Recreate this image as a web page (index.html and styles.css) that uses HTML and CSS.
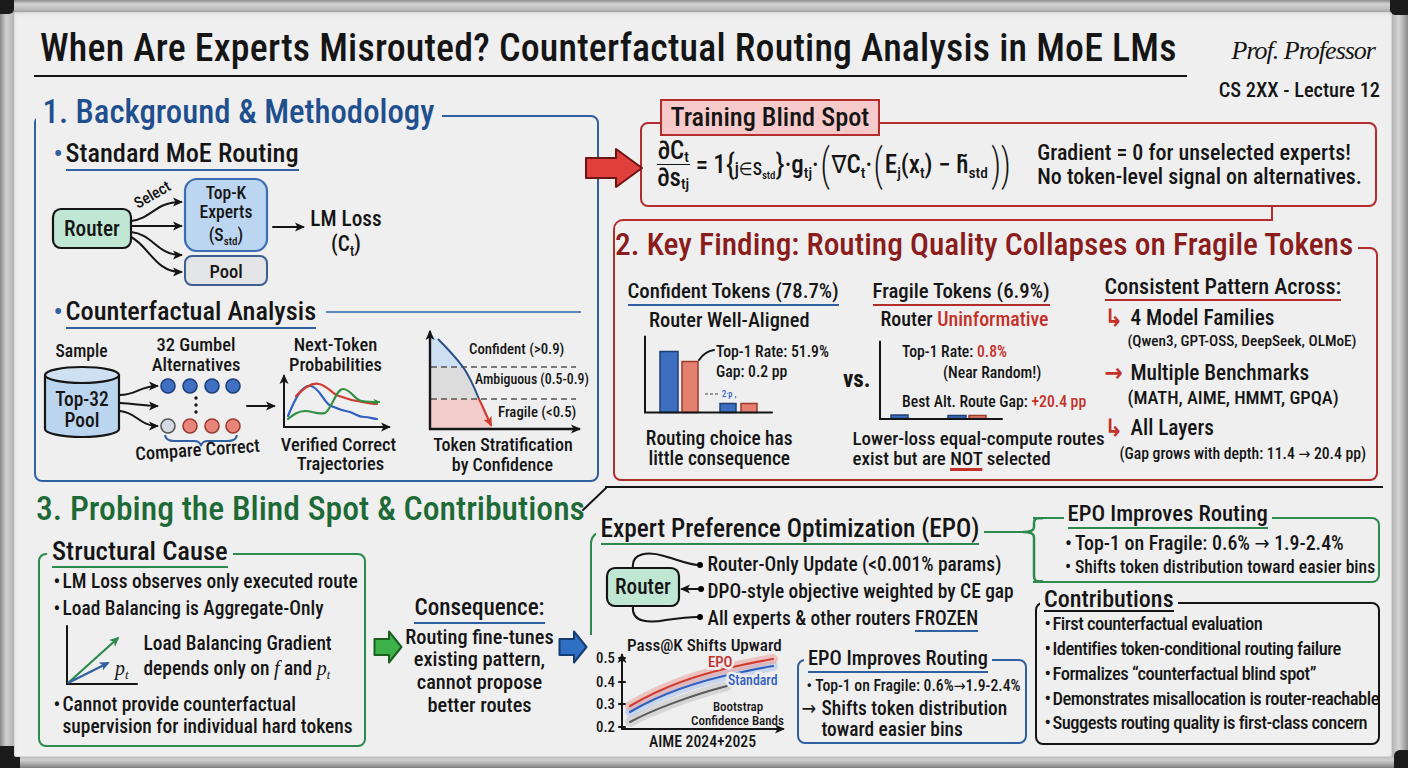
FILE: index.html
```html
<!DOCTYPE html>
<html lang="en">
<head>
<meta charset="utf-8">
<title>When Are Experts Misrouted? Counterfactual Routing Analysis in MoE LMs</title>
<link rel="stylesheet" href="styles.css">
</head>
<body>
<div class="frame">
  <span class="cap cap-tl"></span><span class="cap cap-tr"></span><span class="cap cap-bl"></span><span class="cap cap-br"></span>
  <div class="board">
    <header class="hdr">
      <h1 class="title">When Are Experts Misrouted? Counterfactual Routing Analysis in MoE LMs</h1>
      <div class="byline">
        <div class="sig">Prof. Professor</div>
        <div class="lecture">CS 2XX - Lecture 12</div>
      </div>
    </header>

    <div class="top">
      <section class="s1">
        <h2 class="sec-title blue-t">1. Background &amp; Methodology</h2>
        <div class="sub"><span class="dot">•</span><span class="u">Standard MoE Routing</span></div>
        <svg class="dg d-route" width="355" height="115" viewBox="0 0 355 115">
          <defs>
            <marker id="mk" viewBox="0 0 10 10" refX="8" refY="5" markerUnits="userSpaceOnUse" markerWidth="10" markerHeight="10" orient="auto"><path d="M0,0.5 L10,5 L0,9.5 L2.5,5 Z" fill="#151515"/></marker>
            <marker id="mg" viewBox="0 0 10 10" refX="8" refY="5" markerUnits="userSpaceOnUse" markerWidth="10" markerHeight="10" orient="auto"><path d="M0,0.5 L10,5 L0,9.5 L2.5,5 Z" fill="#2c8a4f"/></marker>
            <marker id="mb" viewBox="0 0 10 10" refX="8" refY="5" markerUnits="userSpaceOnUse" markerWidth="10" markerHeight="10" orient="auto"><path d="M0,0.5 L10,5 L0,9.5 L2.5,5 Z" fill="#2f60a0"/></marker>
            <marker id="mr" viewBox="0 0 10 10" refX="8" refY="5" markerUnits="userSpaceOnUse" markerWidth="10" markerHeight="10" orient="auto"><path d="M0,0.5 L10,5 L0,9.5 L2.5,5 Z" fill="#d13b30"/></marker>
            <marker id="mgs" viewBox="0 0 10 10" refX="8" refY="5" markerUnits="userSpaceOnUse" markerWidth="7" markerHeight="7" orient="auto"><path d="M0,0.5 L10,5 L0,9.5 L2.5,5 Z" fill="#2f8f3f"/></marker>
          </defs>
          <g class="ln" marker-end="url(#mk)">
            <path d="M86,47 C108,44 110,28 136,28"/>
            <path d="M86,52 C105,52 118,52 136,52"/>
            <path d="M86,58 C108,60 112,81 136,81"/>
            <path d="M86,63 C104,72 110,98 136,98"/>
            <path d="M228,53 L258,53"/>
          </g>
          <rect x="8" y="35" width="78" height="39" rx="8" class="box-g"/>
          <text x="47" y="62" class="f23" text-anchor="middle">Router</text>
          <rect x="140" y="5" width="82" height="72" rx="12" class="box-b"/>
          <text x="181" y="25" class="f19" text-anchor="middle">Top-K</text>
          <text x="181" y="44" class="f19" text-anchor="middle">Experts</text>
          <text x="181" y="67" class="f19" text-anchor="middle">(S<tspan class="f12" dy="4">std</tspan><tspan dy="-4">)</tspan></text>
          <rect x="140" y="82" width="82" height="29" rx="7" class="box-p"/>
          <text x="181" y="104" class="f20" text-anchor="middle">Pool</text>
          <text x="93" y="35" class="f17" transform="rotate(-30 93 35)">Select</text>
          <text x="301" y="52" class="f23" text-anchor="middle">LM Loss</text>
          <text x="301" y="77" class="f23" text-anchor="middle">(C<tspan class="f15" dy="5">t</tspan><tspan dy="-5">)</tspan></text>
        </svg>
        <div class="sub"><span class="dot">•</span><span class="u">Counterfactual Analysis</span><span class="rule"></span></div>
        <svg class="dg d-cf" width="556" height="148" viewBox="0 0 556 148">
          <text x="41.5" y="28" class="f19" text-anchor="middle">Sample</text>
          <path d="M5,46 V100 A37,8 0 0 0 79,100 V46" class="cyl"/>
          <ellipse cx="42" cy="46" rx="37" ry="8" class="cyl-top"/>
          <text x="42" y="77" class="f21" text-anchor="middle">Top-32</text>
          <text x="42" y="98" class="f21" text-anchor="middle">Pool</text>
          <g class="ln" marker-end="url(#mk)">
            <path d="M80,66 C96,66 100,57 117,57"/>
            <path d="M80,74 C96,75 104,77 117,77"/>
            <path d="M80,82 C96,83 100,97 117,97"/>
            <path d="M207,77 L234,77"/>
          </g>
          <text x="156" y="22" class="f20" text-anchor="middle">32 Gumbel</text>
          <text x="156" y="42" class="f20" text-anchor="middle">Alternatives</text>
          <g class="dot-b">
            <circle cx="128" cy="57" r="7"/><circle cx="150" cy="57" r="7"/><circle cx="172" cy="57" r="7"/><circle cx="193" cy="57" r="7"/>
          </g>
          <g class="dot-k">
            <circle cx="156" cy="69" r="1.7"/><circle cx="156" cy="76" r="1.7"/><circle cx="156" cy="83" r="1.7"/>
          </g>
          <circle cx="128" cy="97" r="7" class="dot-gray"/>
          <g class="dot-r">
            <circle cx="150" cy="97" r="7"/><circle cx="172" cy="97" r="7"/><circle cx="193" cy="97" r="7"/>
          </g>
          <path d="M125,106 Q126,112 134,112 L154,112 Q160,112 161,117 Q162,112 168,112 L188,112 Q196,112 197,106" class="brace-b"/>
          <text x="158" y="127" class="f20" text-anchor="middle" transform="rotate(-4 158 127)">Compare Correct</text>

          <text x="295.5" y="22" class="f20" text-anchor="middle">Next-Token</text>
          <text x="295.5" y="42" class="f20" text-anchor="middle">Probabilities</text>
          <g class="ln" marker-end="url(#mk)">
            <path d="M244,98 V47"/>
            <path d="M244,98 H349"/>
          </g>
          <path d="M248,87 C255,70 262,55 271,57 C280,59 284,74 291,77 C298,80 305,82 310,83 C316,85 318,88 324,88 C330,88 333,90 337,90" class="cv-b"/>
          <path d="M256,67 C263,60 271,53 279,55 C288,57 292,65 299,67 C307,70 315,72 322,73 C328,74 333,75 337,75" class="cv-r"/>
          <path d="M248,90 C253,86 258,82 265,82 C272,82 278,86 285,84 C292,80 296,60 303,60 C311,60 315,72 322,72 C328,73 333,73 339,73" class="cv-g" marker-end="url(#mgs)"/>
          <text x="298.5" y="122" class="f20" text-anchor="middle">Verified Correct</text>
          <text x="300.5" y="141" class="f20" text-anchor="middle">Trajectories</text>

          <path d="M391,6 L398,10 C408,20 417,30 423,38 L391,38 Z" class="band-b"/>
          <path d="M391,38 L423,38 C430,48 435,60 439,70 L391,70 Z" class="band-g"/>
          <path d="M391,70 L439,70 C444,80 448,90 452,99 L391,99 Z" class="band-r"/>
          <path d="M391,38 H536 M391,70 H536" class="dash"/>
          <path d="M398,10 C408,20 417,30 423,38 C430,48 435,60 439,70" class="cv-d"/>
          <path d="M439,70 C444,80 447,88 451,96" class="cv-r" marker-end="url(#mr)"/>
          <g class="ln ln-thick" marker-end="url(#mk)">
            <path d="M390,100 V3"/>
            <path d="M390,100 H539"/>
          </g>
          <text x="429" y="25" class="f16">Confident (&gt;0.9)</text>
          <text x="435" y="55" class="f15">Ambiguous (0.5-0.9)</text>
          <text x="458" y="88" class="f16">Fragile (&lt;0.5)</text>
          <text x="463" y="122" class="f19h" text-anchor="middle">Token Stratification</text>
          <text x="462.5" y="142" class="f19h" text-anchor="middle">by Confidence</text>
        </svg>
      </section>

      <div class="rt">
        <div class="blind">
          <svg class="bigarrow" width="60" height="42" viewBox="0 0 60 42"><path d="M2,11 H32 V2 L58,21 L32,40 V31 H2 Z" class="arrow-red"/></svg>
          <div class="blind-label">Training Blind Spot</div>
          <div class="blind-body">
            <div class="formula">
              <span class="frac"><span class="num">∂C<sub>t</sub></span><span class="den">∂s<sub>tj</sub></span></span>
              <span class="eqs">=</span><span>1</span><span class="cb">{</span><span class="setc">j∈S<sub>std</sub></span><span class="cb">}</span><span>·g<sub>tj</sub>·</span><span class="br">(</span><span>∇C<sub>t</sub>·</span><span class="br">(</span><span>E<sub>j</sub>(x<sub>t</sub>) − h̃<sub>std</sub></span><span class="br">))</span>
            </div>
            <div class="note">Gradient = 0 for unselected experts!<br>No token-level signal on alternatives.</div>
          </div>
        </div>
        <div class="link"></div>
        <div class="rail"></div>
        <section class="s2">
          <h2 class="s2-title">2. Key Finding: Routing Quality Collapses on Fragile Tokens</h2>
          <div class="s2-body">
            <div class="col">
              <div class="hA">Confident Tokens (78.7%)</div>
              <div class="rA">Router Well-Aligned</div>
              <svg class="dg svgA" width="212" height="88" viewBox="0 0 212 88">
                <rect x="32" y="19.5" width="18" height="61" class="bar-b"/>
                <rect x="54" y="29.5" width="16" height="51" class="bar-r"/>
                <rect x="92" y="71.5" width="16" height="9" class="bar-b"/>
                <rect x="113" y="71.5" width="16" height="9" class="bar-r"/>
                <path d="M17,4.5 V80.5 H144" class="ax"/>
                <path d="M71,28 C75,22 79,19 86,18" class="ax"/>
                <path d="M77,62 H91" class="dash-s"/>
                <text x="94" y="65" class="f9 tb">2·p ,</text>
                <text x="88" y="24.5" class="f17">Top-1 Rate: 51.9%</text>
                <text x="88" y="44.5" class="f17">Gap: 0.2 pp</text>
              </svg>
              <div class="cA">Routing choice has<br>little consequence</div>
            </div>
            <div class="col">
              <div class="hB">Fragile Tokens (6.9%)</div>
              <div class="rB">Router <span class="red">Uninformative</span></div>
              <svg class="dg svgB" width="263" height="88" viewBox="0 0 263 88">
                <text x="3" y="54.5" class="f25 bold">vs.</text>
                <rect x="51" y="83" width="17" height="3.5" class="bar-b"/>
                <rect x="108" y="83.5" width="18" height="3" class="bar-b"/>
                <rect x="129" y="83.5" width="17" height="3" class="bar-r"/>
                <path d="M40,9.5 V87 H162" class="ax"/>
                <text x="62" y="24.5" class="f17">Top-1 Rate: <tspan class="tr">0.8%</tspan></text>
                <text x="103" y="45.5" class="f17">(Near Random!)</text>
                <text x="62" y="74.5" class="f17">Best Alt. Route Gap: <tspan class="tr">+20.4 pp</tspan></text>
              </svg>
              <div class="cB">Lower-loss equal-compute routes<br>exist but are <span class="not">NOT</span> selected</div>
            </div>
            <div class="col">
              <div class="hC">Consistent Pattern Across:</div>
              <div class="it it1"><span class="ar">↳</span><span>4 Model Families</span></div>
              <div class="pa pa1">(Qwen3, GPT-OSS, DeepSeek, OLMoE)</div>
              <div class="it it2"><span class="ar">→</span><span>Multiple Benchmarks</span></div>
              <div class="pa pa2">(MATH, AIME, HMMT, GPQA)</div>
              <div class="it it3"><span class="ar">↳</span><span>All Layers</span></div>
              <div class="pa pa3">(Gap grows with depth: 11.4 → 20.4 pp)</div>
            </div>
          </div>
        </section>
        <svg class="diag" width="28" height="26" viewBox="0 0 28 26"><path d="M3,24 L26,2" class="ax"/></svg>
      </div>
    </div>

    <section class="s3">
      <div class="s3-left">
        <h2 class="sec-title3">3. Probing the Blind Spot &amp; Contributions</h2>
        <div class="s3-row">
          <div class="cause">
            <div class="cause-title"><span>Structural Cause</span></div>
            <ul class="bl">
              <li><span class="b">•</span><span>LM Loss observes only executed route</span></li>
              <li><span class="b">•</span><span>Load Balancing is Aggregate-Only</span></li>
            </ul>
            <div class="vec">
              <svg class="dg" width="82" height="65" viewBox="0 0 82 65">
                <path d="M7,2 V60 H77" class="ax"/>
                <path d="M8,59 L58,14" class="ar-g" marker-end="url(#mg)"/>
                <path d="M8,59 L48,39" class="ar-b" marker-end="url(#mb)"/>
                <text x="55" y="51" class="serif-i">p<tspan class="sub-s" dy="4">t</tspan></text>
              </svg>
              <div class="txt">Load Balancing Gradient<br>depends only on <i class="m">f</i> and <i class="m">p<sub>t</sub></i></div>
            </div>
            <ul class="bl bl3">
              <li><span class="b">•</span><span>Cannot provide counterfactual<br>supervision for individual hard tokens</span></li>
            </ul>
          </div>
          <div class="conseq">
            <svg class="ga" width="30" height="34" viewBox="0 0 30 34"><path d="M1.5,9 H16 V1.5 L28.5,17 L16,32.5 V25 H1.5 Z" class="arrow-green"/></svg>
            <div class="ctext">
              <div class="ctitle"><span>Consequence:</span></div>
              <p>Routing fine-tunes<br>existing pattern,<br>cannot propose<br>better routes</p>
            </div>
            <svg class="ba" width="30" height="34" viewBox="0 0 30 34"><path d="M1.5,9 H16 V1.5 L28.5,17 L16,32.5 V25 H1.5 Z" class="arrow-blue"/></svg>
          </div>
        </div>
      </div>

      <div class="s3-mid">
        <div class="epo">
          <div class="epo-title"><span>Expert Preference Optimization (EPO)</span></div>
          <div class="epo-row">
            <svg class="dg" width="108" height="84" viewBox="0 0 108 84">
              <path d="M35,17 C33,2 50,0 66,5 C80,9 92,14 100,14" class="ln"/>
              <path d="M35,55 C33,72 52,72 68,69 C82,67 92,66 100,66" class="ln"/>
              <path d="M100,38 L84,38" class="ln" marker-end="url(#mk)"/>
              <circle cx="102" cy="14" r="3"/><circle cx="103" cy="38" r="3"/><circle cx="102" cy="66" r="3"/>
              <rect x="9" y="17" width="72" height="38" rx="8" class="box-g"/>
              <text x="45" y="43" class="f23" text-anchor="middle">Router</text>
            </svg>
            <div class="epo-lines">Router-Only Update (&lt;0.001% params)<br>DPO-style objective weighted by CE gap<br>All experts &amp; other routers <span class="frozen">FROZEN</span></div>
          </div>
        </div>
        <div class="epo-bottom">
          <svg class="dg passk" width="200" height="120" viewBox="0 0 200 120">
            <text x="35" y="16" class="f18h">Pass@K Shifts Upward</text>
            <path d="M38,87 C60,75 100,60 135,51" class="bd-k"/>
            <path d="M38,77 C70,58 110,45 150,37 C165,34 175,32 181,31" class="bd-b"/>
            <path d="M38,71 C70,52 110,38 150,30 C165,27 175,25 181,24" class="bd-r"/>
            <path d="M38,87 C60,75 100,60 135,51" class="cv-k"/>
            <path d="M38,77 C70,58 110,45 150,37 C165,34 175,32 181,31" class="cv-b"/>
            <path d="M38,71 C70,52 110,38 150,30 C165,27 175,25 181,24" class="cv-r"/>
            <g class="ln" marker-end="url(#mk)">
              <path d="M30,94 V20"/>
              <path d="M30,94 H191"/>
            </g>
            <path d="M27,23 H33 M27,47 H33 M27,69 H33 M27,92 H33" class="ax"/>
            <text x="23" y="28" class="f16" text-anchor="end">0.5</text>
            <text x="23" y="52" class="f16" text-anchor="end">0.4</text>
            <text x="23" y="74" class="f16" text-anchor="end">0.3</text>
            <text x="23" y="97" class="f16" text-anchor="end">0.2</text>
            <text x="116" y="32" class="f16 tr halo">EPO</text>
            <text x="136" y="50" class="f15 tb halo">Standard</text>
            <text x="146" y="76" class="f14" text-anchor="middle">Bootstrap</text>
            <text x="145.5" y="90" class="f14" text-anchor="middle">Confidence Bands</text>
            <text x="110.5" y="112" class="f17" text-anchor="middle">AIME 2024+2025</text>
          </svg>
          <div class="epo3">
            <div class="epo3-title"><span>EPO Improves Routing</span></div>
            <div class="l1">• Top-1 on Fragile: 0.6%→1.9-2.4%</div>
            <div class="l2"><span class="ar">→</span><span>Shifts token distribution<br>toward easier bins</span></div>
          </div>
        </div>
      </div>

      <div class="s3-right">
        <div class="epo2">
          <svg class="brace" width="24" height="92" viewBox="0 0 24 92"><path d="M22,26.2 H18 C15,26.2 14,28 14,31 V35 C14,38 10,40 3,40 C10,40 14,42 14,45 V84 C14,87.5 15,89.2 18,89.2 H22" class="brace-g"/></svg>
          <div class="epo2-title"><span>EPO Improves Routing</span></div>
          <ul class="bl">
            <li><span class="b">•</span><span>Top-1 on Fragile: 0.6% → 1.9-2.4%</span></li>
            <li><span class="b">•</span><span>Shifts token distribution toward easier bins</span></li>
          </ul>
        </div>
        <div class="contrib">
          <div class="contrib-title"><span>Contributions</span></div>
          <ul class="bl">
            <li><span class="b">•</span><span>First counterfactual evaluation</span></li>
            <li><span class="b">•</span><span>Identifies token-conditional routing failure</span></li>
            <li><span class="b">•</span><span>Formalizes “counterfactual blind spot”</span></li>
            <li><span class="b">•</span><span>Demonstrates misallocation is router-reachable</span></li>
            <li><span class="b">•</span><span>Suggests routing quality is first-class concern</span></li>
          </ul>
        </div>
      </div>
    </section>
  </div>
</div>
</body>
</html>
```

FILE: styles.css
```css
:root {
  --hand: "Roboto Condensed", "DejaVu Sans Condensed", "Liberation Sans", sans-serif;
  --k: 0.925;
  --ink: #151515;
  --board: #efefef;
  --blue: #2f60a0;
  --blue-t: #1f4f8e;
  --red: #b32d2d;
  --red-t: #8a1c1c;
  --red-x: #c4302a;
  --green: #2c8a4f;
  --green-t: #1d6a36;
}

* { box-sizing: border-box; }
html, body { margin: 0; padding: 0; }
body {
  width: 1408px;
  height: 768px;
  overflow: hidden;
  font-family: var(--hand);
  font-stretch: condensed;
  font-weight: 500;
  color: var(--ink);
  background: #777;
}
h1, h2 { margin: 0; font-weight: 500; }
ul { margin: 0; padding: 0; list-style: none; }
p { margin: 0; }
sub { font-size: 0.62em; line-height: 0; vertical-align: -0.35em; }

/* ---------- whiteboard frame ---------- */
.frame {
  position: relative;
  width: 1408px;
  height: 768px;
  padding: 12px 16px 11px 14px;
  background:
    linear-gradient(180deg, #8c8c8c 0, #d3d3d3 4px, #bdbdbd 9px, #a3a3a3 12px) top / 100% 12px no-repeat,
    linear-gradient(0deg, #7d7d7d 0, #a9a9a9 4px, #d0d0d0 8px, #bdbdbd 11px) bottom / 100% 11px no-repeat,
    linear-gradient(90deg, #888 0, #d0d0d0 6px, #b3b3b3 14px, #b3b3b3 1392px, #d6d6d6 1399px, #8a8a8a 1408px);
}
.cap { position: absolute; background: #1b1b1b; }
.cap-tl { left: 0; top: 0; width: 14px; height: 14px; border-radius: 0 0 5px 0; }
.cap-tr { right: 0; top: 0; width: 18px; height: 15px; border-radius: 0 0 0 5px; }
.cap-bl { left: 0; bottom: 0; width: 20px; height: 22px; border-radius: 0 6px 0 0; }
.cap-br { right: 0; bottom: 0; width: 14px; height: 18px; border-radius: 6px 0 0 0; }

.board {
  position: relative;
  width: 1378px;
  height: 745px;
  background: var(--board);
  border-radius: 3px;
  box-shadow: inset 0 0 0 1px #d9d9d9, inset 0 2px 4px rgba(0, 0, 0, 0.08);
}

/* ---------- header ---------- */
.hdr { display: flex; align-items: flex-start; height: 83px; padding-right: 12px; }
.title {
  margin: 13px 0 0 20px;
  padding: 0 0 4px 6px;
  width: 1153px;
  font-size: calc(41px * var(--k));
  line-height: 46px;
  letter-spacing: 0.2px;
  white-space: nowrap;
  border-bottom: 2.5px solid var(--ink);
}
.byline { margin-left: auto; padding-top: 14px; text-align: right; }
.sig {
  font-family: "Liberation Serif", "DejaVu Serif", serif;
  font-style: italic;
  font-stretch: normal;
  font-weight: 400;
  font-size: 26px;
  line-height: 50px;
  letter-spacing: -1px;
  padding-right: 5px;
}
.lecture { font-size: calc(22px * var(--k)); line-height: 28px; white-space: nowrap; }

/* ---------- top band ---------- */
.top {
  display: grid;
  grid-template-columns: 565px 778px;
  column-gap: 6px;
  margin-left: 20px;
  height: 393px;
}

/* section 1 */
.s1 {
  margin-top: 20px;
  height: 367px;
  border: 2.5px solid var(--blue);
  border-radius: 8px;
}
.sec-title {
  width: fit-content;
  margin: -24px 0 0 0;
  padding: 0 8px 0 6.5px;
  font-size: calc(35.5px * var(--k));
  line-height: 38px;
  background: var(--board);
  white-space: nowrap;
}
.blue-t { color: var(--blue-t); }
.sub {
  display: flex;
  align-items: center;
  margin: 6px 16.5px 0 17.5px;
  font-size: calc(28.5px * var(--k));
  line-height: 32px;
  white-space: nowrap;
}
.sub .dot { width: 12px; color: var(--blue); }
.sub .u { border-bottom: 2.5px solid var(--blue); }
.sub .rule { flex: 1; height: 0; border-top: 2px solid #5d87be; margin-left: 10px; }
.d-route { display: block; margin: 3px 0 0 8.5px; }
.d-cf { display: block; margin: 0 0 0 3.5px; }

/* svg diagrams */
.dg text { font-family: var(--hand); font-weight: 500; fill: var(--ink); }
.dg .f9 { font-size: calc(9px * var(--k)); }
.dg .f12 { font-size: calc(12px * var(--k)); }
.dg .f14 { font-size: calc(14px * var(--k)); }
.dg .f15 { font-size: calc(15px * var(--k)); }
.dg .f16 { font-size: calc(16px * var(--k)); }
.dg .f17 { font-size: calc(17px * var(--k)); }
.dg .f18h { font-size: calc(18.5px * var(--k)); }
.dg .f19 { font-size: calc(19px * var(--k)); }
.dg .f19h { font-size: calc(19.5px * var(--k)); }
.dg .f20 { font-size: calc(20px * var(--k)); }
.dg .f21 { font-size: calc(21px * var(--k)); }
.dg .f23 { font-size: calc(23px * var(--k)); }
.dg .f25 { font-size: calc(25px * var(--k)); }
.dg .tr { fill: var(--red-x); }
.dg .tb { fill: #2f60c0; }
.dg .bold { font-weight: bold; }
.dg .serif-i { font-family: "Liberation Serif", serif; font-style: italic; font-weight: 400; font-size: 20px; }
.dg .sub-s { font-size: 13px; }
.dg .halo { paint-order: stroke; stroke: var(--board); stroke-width: 5px; }
.ln { fill: none; stroke: var(--ink); stroke-width: 2; stroke-linecap: round; }
.ln-thick { stroke-width: 2.4; }
.ax { fill: none; stroke: var(--ink); stroke-width: 2; stroke-linecap: round; }
.box-g { fill: #bfe7d3; stroke: var(--ink); stroke-width: 2.2; }
.box-b { fill: #bcd5f1; stroke: #3b6db0; stroke-width: 2.2; }
.box-p { fill: #e3e4e6; stroke: #3b5f8f; stroke-width: 2; }
.cyl { fill: #bcd5ef; stroke: var(--ink); stroke-width: 2.2; }
.cyl-top { fill: #cfe0f3; stroke: var(--ink); stroke-width: 2.2; }
.dot-b circle { fill: #3f70c2; stroke: #1d3f7a; stroke-width: 1.6; }
.dot-r circle { fill: #e8857b; stroke: #9c3a30; stroke-width: 1.6; }
.dot-gray { fill: #d5d9e2; stroke: #555; stroke-width: 1.6; }
.dot-k circle { fill: var(--ink); }
.brace-b { fill: none; stroke: #2f60a0; stroke-width: 2; }
.brace-g { fill: none; stroke: var(--green); stroke-width: 2.5; stroke-linecap: round; }
.cv-b { fill: none; stroke: #2f60c0; stroke-width: 2.2; stroke-linecap: round; }
.cv-r { fill: none; stroke: #d13b30; stroke-width: 2.2; stroke-linecap: round; }
.cv-g { fill: none; stroke: #2f8f3f; stroke-width: 2.2; stroke-linecap: round; }
.cv-k { fill: none; stroke: #5a5a5a; stroke-width: 2; stroke-linecap: round; }
.cv-d { fill: none; stroke: #2a4f86; stroke-width: 2; }
.bd-r { fill: none; stroke: #e7a19a; stroke-width: 10; stroke-linecap: round; opacity: 0.55; }
.bd-b { fill: none; stroke: #a9c0e6; stroke-width: 10; stroke-linecap: round; opacity: 0.55; }
.bd-k { fill: none; stroke: #c4c4c4; stroke-width: 10; stroke-linecap: round; opacity: 0.6; }
.band-b { fill: #cddff3; }
.band-g { fill: #dcdcdc; }
.band-r { fill: #f4cccc; }
.dash { fill: none; stroke: #555; stroke-width: 1.5; stroke-dasharray: 6 4; }
.dash-s { fill: none; stroke: #444; stroke-width: 1.2; stroke-dasharray: 3 2; }
.bar-b { fill: #3d6fc0; stroke: #1f3f78; stroke-width: 1.5; }
.bar-r { fill: #e4806f; stroke: #9b3b2f; stroke-width: 1.5; }
.ar-g { fill: none; stroke: var(--green); stroke-width: 2.2; }
.ar-b { fill: none; stroke: var(--blue); stroke-width: 2.2; }
.arrow-red { fill: #e0403c; stroke: #6d1414; stroke-width: 2; stroke-linejoin: round; }
.arrow-green { fill: #3db24a; stroke: #1b5e20; stroke-width: 2; stroke-linejoin: round; }
.arrow-blue { fill: #2f6fc4; stroke: #173c73; stroke-width: 2; stroke-linejoin: round; }

/* right top column */
.rt {
  position: relative;
  display: flex;
  flex-direction: column;
  align-items: flex-start;
  height: 393px;
  border-bottom: 2.5px solid var(--ink);
}
.blind {
  position: relative;
  flex: none;
  margin: 27px 0 0 35px;
  width: 737px;
  height: 85px;
  border: 2.5px solid var(--red);
  border-radius: 8px;
}
.bigarrow { position: absolute; left: -58.5px; top: 22.5px; }
.blind-label {
  width: fit-content;
  margin: -25.5px 0 0 17.5px;
  height: 37px;
  padding: 0 9px;
  font-size: calc(28.5px * var(--k));
  line-height: 33px;
  background: #f6caca;
  border: 2px solid var(--red);
  white-space: nowrap;
}
.blind-body { display: flex; align-items: center; height: 58.5px; padding: 0 13px 0 14.5px; }
.formula { display: flex; align-items: center; font-size: calc(27px * var(--k)); line-height: 28px; white-space: nowrap; }
.frac { display: inline-flex; flex-direction: column; align-items: center; margin-right: 6px; line-height: 26px; }
.frac .num { border-bottom: 1.8px solid var(--ink); padding: 0 1px; }
.frac sub { vertical-align: -0.2em; }
.eqs { margin-right: 5px; }
.cb { display: inline-block; font-size: 1.2em; font-weight: 400; line-height: 30px; }
.br { display: inline-block; font-size: 1.75em; font-weight: 300; line-height: 40px; transform: scaleX(0.75); }
.setc { font-size: 0.7em; margin-top: 8px; }
.note { margin-left: auto; font-size: 22px; line-height: 24px; white-space: nowrap; }

.link { flex: none; margin-left: 8px; width: 659.5px; height: 12px; border-right: 2.5px solid var(--red); }
.rail {
  flex: none;
  margin-left: 8px;
  width: 659.5px;
  height: 28px;
  border-top: 2.5px solid var(--red);
  border-left: 2.5px solid var(--red);
  border-top-left-radius: 10px;
}
.s2 {
  flex: none;
  margin-left: 8px;
  width: 765px;
  height: 234px;
  border: 2.5px solid var(--red);
  border-radius: 0 8px 8px 8px;
}
.s2-title {
  width: fit-content;
  margin: -22.5px 0 0 0;
  padding: 0 5px 0 0;
  font-size: calc(34px * var(--k));
  line-height: 36px;
  color: var(--red-t);
  background: var(--board);
  white-space: nowrap;
}
.s2-body { display: grid; grid-template-columns: 224.5px 263px 1fr; }
.col { display: flex; flex-direction: column; align-items: flex-start; }
.red { color: var(--red-x); }

.hA, .hB {
  margin-top: 15px;
  font-size: calc(22.5px * var(--k));
  line-height: 26px;
  white-space: nowrap;
}
.hA { margin-left: 12.5px; border-bottom: 2.5px solid var(--blue); }
.hB { margin-left: 33px; border-bottom: 2.5px solid var(--red); }
.rA { align-self: stretch; margin-top: 2px; padding-left: 4px; text-align: center; font-size: calc(22px * var(--k)); line-height: 24px; white-space: nowrap; }
.rB { margin: 2px 0 0 41px; font-size: calc(21.5px * var(--k)); line-height: 24px; white-space: nowrap; }
.svgA { display: block; margin-left: 12.5px; }
.svgB { display: block; }
.cA { align-self: stretch; margin-top: 9.5px; padding-right: 16px; text-align: center; font-size: calc(21px * var(--k)); line-height: 20px; white-space: nowrap; }
.cB { margin: 9.5px 0 0 13px; font-size: calc(20.5px * var(--k)); line-height: 20px; white-space: nowrap; }
.not { text-decoration: underline; text-decoration-color: var(--red-x); text-decoration-thickness: 2.5px; text-underline-offset: 3px; }

.hC { margin: 10.7px 0 0 2px; font-size: calc(24px * var(--k)); line-height: 26px; border-bottom: 2.5px solid var(--red); white-space: nowrap; }
.it { display: flex; margin-left: 2px; font-size: calc(23px * var(--k)); line-height: 26px; white-space: nowrap; }
.it .ar { width: 26px; flex: none; color: var(--red-x); font-weight: 700; font-size: 1.15em; }
.it1 { margin-top: 3.7px; }
.it2 { margin-top: 8.8px; }
.it3 { margin-top: 6.6px; }
.pa { white-space: nowrap; }
.pa1 { margin: 0.5px 0 0 25px; font-size: calc(16.5px * var(--k)); line-height: 20px; }
.pa2 { margin: 0.4px 0 0 25px; font-size: calc(20px * var(--k)); line-height: 22px; }
.pa3 { margin: 2.4px 0 0 17px; font-size: calc(17px * var(--k)); line-height: 20px; }

.diag { position: absolute; left: -25px; top: 391px; }

/* ---------- section 3 ---------- */
.s3 {
  display: grid;
  grid-template-columns: 554px 442px 353px;
  margin-left: 20px;
  height: 269px;
}
.s3-left { display: flex; flex-direction: column; }
.sec-title3 {
  margin: 2.4px 0 0 2px;
  font-size: calc(36.4px * var(--k));
  line-height: 38px;
  color: var(--green-t);
  white-space: nowrap;
}
.s3-row { display: flex; align-items: flex-start; }

.cause {
  flex: none;
  margin: 24.6px 0 0 4px;
  width: 328px;
  height: 194px;
  border: 2.5px solid var(--green);
  border-radius: 8px;
}
.cause-title {
  display: flex;
  width: fit-content;
  margin: -18.5px 0 0 7px;
  padding: 0 5px;
  font-size: calc(28.8px * var(--k));
  line-height: 30px;
  background: var(--board);
  white-space: nowrap;
}
.cause-title span { border-bottom: 2.5px solid var(--green); }
.bl li { display: flex; white-space: nowrap; }
.bl .b { flex: none; }
.cause .bl { margin-left: 13.5px; font-size: calc(21px * var(--k)); line-height: 27px; }
.cause .bl .b { width: 9px; }
.cause .bl3 { margin-top: 4.2px; line-height: 22px; }
.vec { display: flex; align-items: flex-start; height: 67px; }
.vec svg { flex: none; margin: 1.5px 0 0 19.5px; }
.vec .txt { margin: 8.7px 0 0 2px; font-size: calc(21px * var(--k)); line-height: 25px; white-space: nowrap; }
.m { font-family: "Liberation Serif", serif; font-style: italic; font-stretch: normal; font-weight: 400; font-size: 20px; }

.conseq { flex: none; display: flex; align-items: flex-start; width: 222px; }
.conseq .ga { flex: none; margin: 101.6px 0 0 7px; }
.conseq .ba { flex: none; margin: 101.6px 0 0 2px; }
.ctext { flex: none; width: 153px; margin-top: 65.9px; text-align: center; }
.ctitle { display: flex; justify-content: center; }
.ctitle span { font-size: calc(25px * var(--k)); line-height: 28px; border-bottom: 2.5px solid var(--blue); }
.ctext p { margin-top: 1.5px; font-size: calc(22px * var(--k)); line-height: 22.7px; white-space: nowrap; }

.s3-mid { display: flex; flex-direction: column; align-items: flex-start; }
.epo {
  align-self: stretch;
  margin: 43px 3px 0 2px;
  border-top: 2.5px solid var(--green);
  border-left: 2.5px solid var(--green);
  border-top-left-radius: 12px;
}
.epo-title {
  display: flex;
  width: fit-content;
  margin: -20px 0 0 4px;
  padding: 0 4.5px;
  font-size: calc(27.4px * var(--k));
  line-height: 30px;
  background: var(--board);
  white-space: nowrap;
}
.epo-title span { border-bottom: 2.5px solid var(--green); }
.epo-row { display: flex; margin-top: 6px; }
.epo-row svg { flex: none; margin-left: 5.5px; }
.epo-lines { margin-left: 2px; font-size: calc(21px * var(--k)); line-height: 27px; white-space: nowrap; }
.frozen { border-bottom: 2.5px solid var(--blue); }
.epo-bottom { display: flex; align-items: flex-start; }
.passk { display: block; flex: none; margin-left: 4px; }
.epo3 {
  flex: none;
  margin: 24px 0 0 5px;
  width: 230px;
  height: 85px;
  border: 2.5px solid var(--blue);
  border-radius: 8px;
}
.epo3-title {
  display: flex;
  width: fit-content;
  margin: -16.1px 0 0 5px;
  padding: 0 4px;
  font-size: calc(22px * var(--k));
  line-height: 26px;
  background: var(--board);
  white-space: nowrap;
}
.epo3-title span { border-bottom: 2px solid var(--blue); }
.epo3 .l1 { margin: 1.7px 0 0 7.5px; font-size: calc(17px * var(--k)); line-height: 22px; white-space: nowrap; }
.epo3 .l2 { display: flex; margin: 1.6px 0 0 2.5px; font-size: calc(21px * var(--k)); line-height: 21px; white-space: nowrap; }
.epo3 .l2 .ar { width: 20px; flex: none; }

.s3-right { display: flex; flex-direction: column; align-items: flex-start; }
.epo2 {
  position: relative;
  flex: none;
  margin: 29px 0 0 3px;
  width: 347px;
  height: 65.5px;
  border: 2.5px solid var(--green);
  border-left: none;
  border-radius: 0 8px 8px 0;
}
.brace { position: absolute; left: -13px; top: -27.5px; }
.epo2-title {
  display: flex;
  width: fit-content;
  margin: -18px 0 0 30.5px;
  padding: 0 4px;
  font-size: calc(24.5px * var(--k));
  line-height: 26px;
  background: var(--board);
  white-space: nowrap;
}
.epo2-title span { border-bottom: 2.5px solid var(--green); }
.epo2 .bl { margin: 2.5px 0 0 32px; }
.epo2 .bl .b { width: 10px; }
.epo2 .bl li:first-child { font-size: calc(21.5px * var(--k)); line-height: 24px; }
.epo2 .bl li:last-child { font-size: calc(19px * var(--k)); line-height: 23px; }

.contrib {
  flex: none;
  margin: 19.5px 0 0 5px;
  width: 345px;
  height: 143px;
  border: 2.5px solid var(--ink);
  border-radius: 8px;
}
.contrib-title {
  display: flex;
  width: fit-content;
  margin: -16.5px 0 0 3px;
  padding: 0 4px;
  font-size: calc(26px * var(--k));
  line-height: 22px;
  background: var(--board);
  white-space: nowrap;
}
.contrib-title span { border-bottom: 2.5px solid var(--ink); }
.contrib .bl { margin: 0.8px 0 0 7.5px; font-size: calc(20px * var(--k)); line-height: 24.8px; letter-spacing: -0.5px; }
.contrib .bl .b { width: 8px; }
```
